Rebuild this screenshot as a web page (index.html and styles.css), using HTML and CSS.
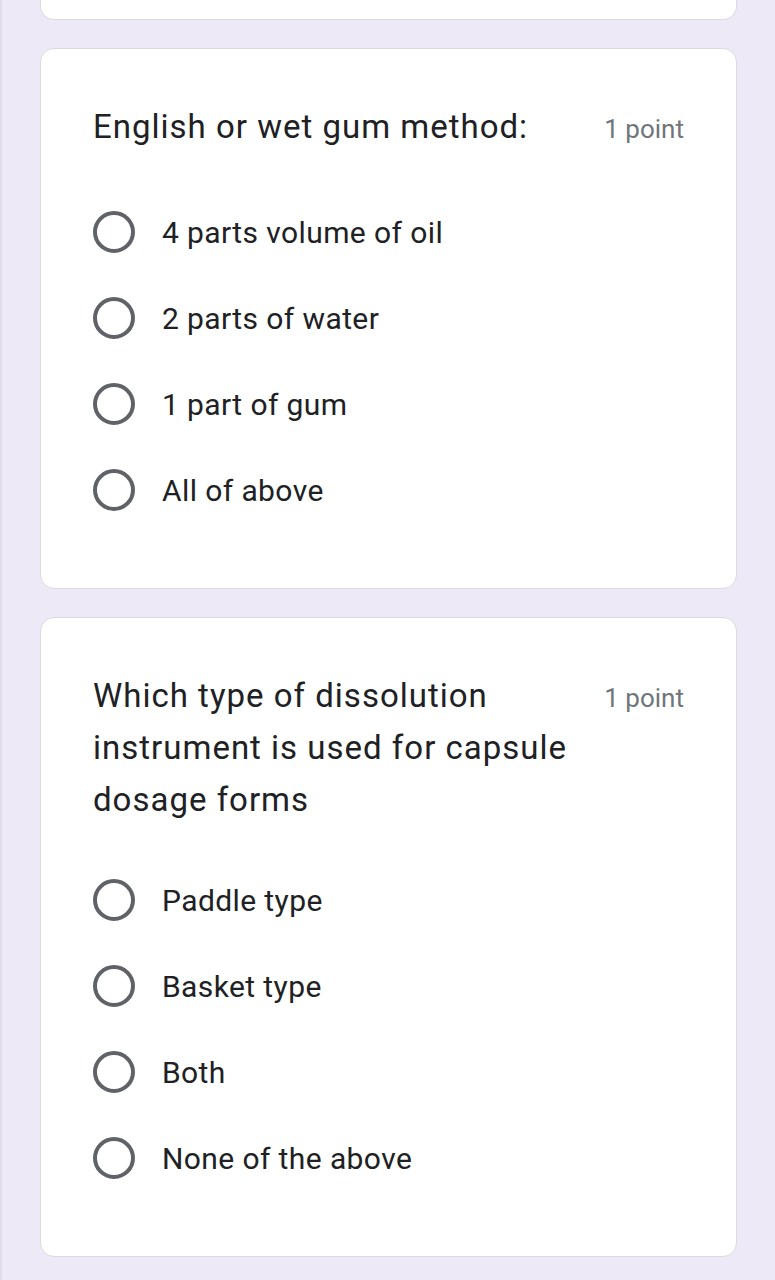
FILE: index.html
```html
<!DOCTYPE html>
<html lang="en">
<head>
<meta charset="utf-8">
<title>Quiz</title>
<link rel="stylesheet" href="styles.css">
</head>
<body>
<main class="form">
  <div class="card card-tail"></div>

  <section class="card">
    <div class="q-head">
      <h2 class="q-title">English or wet gum method:</h2>
      <span class="q-points">1 point</span>
    </div>
    <ul class="options">
      <li class="option"><span class="radio"></span><span class="opt-label">4 parts volume of oil</span></li>
      <li class="option"><span class="radio"></span><span class="opt-label">2 parts of water</span></li>
      <li class="option"><span class="radio"></span><span class="opt-label">1 part of gum</span></li>
      <li class="option"><span class="radio"></span><span class="opt-label">All of above</span></li>
    </ul>
  </section>

  <section class="card">
    <div class="q-head">
      <h2 class="q-title">Which type of dissolution instrument is used for capsule dosage forms</h2>
      <span class="q-points">1 point</span>
    </div>
    <ul class="options">
      <li class="option"><span class="radio"></span><span class="opt-label">Paddle type</span></li>
      <li class="option"><span class="radio"></span><span class="opt-label">Basket type</span></li>
      <li class="option"><span class="radio"></span><span class="opt-label">Both</span></li>
      <li class="option"><span class="radio"></span><span class="opt-label">None of the above</span></li>
    </ul>
  </section>
</main>
</body>
</html>
```

FILE: styles.css
```css
html, body {
  margin: 0;
  padding: 0;
}

body {
  background: #ede9f6;
  font-family: Roboto, "Liberation Sans", sans-serif;
  color: #202124;
  min-height: 1280px;
  border-left: 2px solid #dedae8;
  box-sizing: border-box;
}

.form {
  display: flex;
  flex-direction: column;
  gap: 28px;
  padding: 0 38px 0 38px;
}

.card {
  background: #ffffff;
  border: 1px solid #dcdae0;
  border-radius: 14px;
  padding: 52px 52px 55px 52px;
}

.card-tail {
  height: 19px;
  padding: 0;
  border-top: none;
  border-radius: 0 0 14px 14px;
}

.q-head {
  display: flex;
  align-items: baseline;
  gap: 20px;
  min-height: 57px;
}

.q-title {
  flex: 1;
  margin: 0;
  font-size: 33px;
  font-weight: 400;
  letter-spacing: 1px;
  line-height: 52px;
  color: #202124;
}

.q-points {
  font-size: 26px;
  color: #70757a;
  white-space: nowrap;
}

.options {
  list-style: none;
  margin: 31px 0 0 0;
  padding: 0;
}

.option {
  display: flex;
  align-items: center;
  gap: 27px;
  height: 86px;
}

.radio {
  width: 42px;
  height: 42px;
  box-sizing: border-box;
  border: 4px solid #5f6368;
  border-radius: 50%;
  flex: none;
}

.opt-label {
  font-size: 30px;
  letter-spacing: 0.4px;
  color: #202124;
}
```
